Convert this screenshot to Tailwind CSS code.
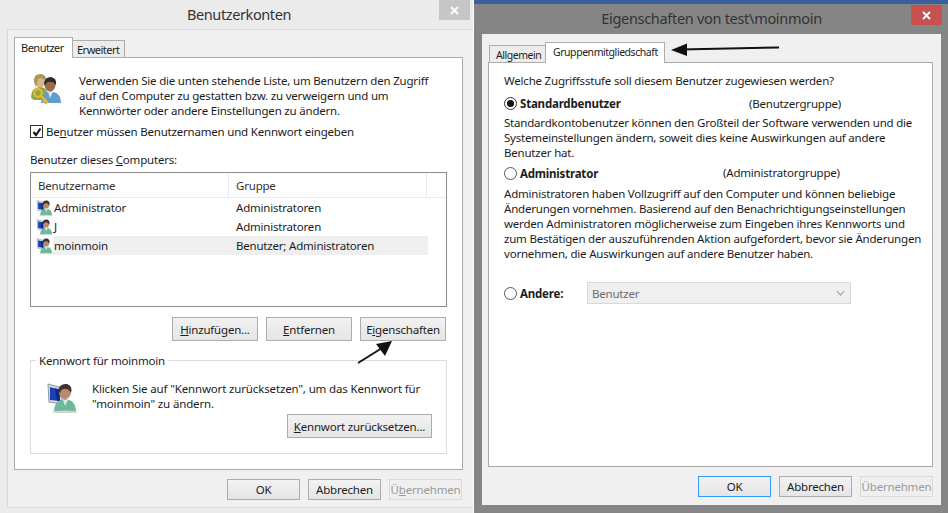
<!DOCTYPE html>
<html lang="de">
<head>
<meta charset="UTF-8">
<title>Benutzerkonten</title>
<script src="https://cdn.jsdelivr.net/npm/@tailwindcss/browser@4"></script>
</head>
<body class="w-[948px] h-[513px] overflow-hidden bg-white text-[#1c1c1c] text-[11.5px] leading-[15px] tracking-[-0.2px] whitespace-nowrap font-['Noto_Sans',sans-serif]">

<!-- shared icons -->
<svg class="hidden">
  <symbol id="pc-user" viewBox="0 0 32 32">
    <path d="M2 3 L16 7 L16 23 L3 21 Z" fill="#d5dbe2" stroke="#8a96a3" stroke-width="1"/>
    <path d="M4 6 L14 9 L14 20 L4 19 Z" fill="#1c3fb5"/>
    <path d="M9 7 L14 9 L14 20 L11 20 Z" fill="#0d2a8a"/>
    <ellipse cx="19" cy="11" rx="6" ry="7" fill="#b98a68"/>
    <path d="M12 9 Q14 2 21 3 Q27 5 25 12 Q22 7 18 8 Q15 8 14 12 Z" fill="#3b3430"/>
    <path d="M8 31 Q8 19 19 18 Q30 19 30 31 Z" fill="#6fb79a"/>
    <path d="M17 19 L19 25 L22 19 Z" fill="#d7ece2"/>
    <ellipse cx="19" cy="31" rx="13" ry="1.4" fill="#cfd6d2"/>
  </symbol>
  <symbol id="users-key" viewBox="0 0 32 32">
    <ellipse cx="10" cy="8" rx="5.5" ry="6.5" fill="#dcb48c"/>
    <path d="M4 9 Q3 1 11 1 Q17 2 16 8 Q12 4 8 6 Q7 11 6 14 Z" fill="#a89a58"/>
    <path d="M1 25 Q1 14 10 14 Q17 14 18 22 L14 27 L4 27 Z" fill="#8aa84e"/>
    <ellipse cx="20" cy="12" rx="5.5" ry="6.5" fill="#9c6a48"/>
    <path d="M14 10 Q15 4 21 4 Q27 5 26 12 Q23 8 19 9 Q16 9 15 13 Z" fill="#2e2a28"/>
    <path d="M11 30 Q11 19 20 18.500 Q31 19 31 30 Z" fill="#5f9fd0"/>
    <path d="M18 19 L20 25 L23 19 Z" fill="#d6e6f2"/>
    <circle cx="8" cy="20" r="3.800" fill="none" stroke="#eeb52c" stroke-width="2.200"/>
    <path d="M11 23 L18 30 M15 27 L13 29 M17 29 L15 31" stroke="#eeb52c" stroke-width="2.200" fill="none"/>
  </symbol>
</svg>

<div class="flex h-full">

  <!-- left dialog -->
  <div class="relative w-[473px] h-full bg-[#ebebeb] flex flex-col shrink-0">
    <div class="h-[29px] flex items-center justify-center text-[14.5px] tracking-[-0.4px] text-[#333] pl-[5px] pb-[1px]">Benutzerkonten</div>
    <div class="absolute top-0 right-[3px] w-[31px] h-[20px] bg-[#c6c6c6] flex items-center justify-center">
      <svg class="w-[9px] h-[9px]" viewBox="0 0 9 9"><path d="M1 1 L8 8 M8 1 L1 8" stroke="#fff" stroke-width="1.800"/></svg>
    </div>

    <div class="ml-[7px] h-[479px] border border-[#d9d9d9] border-r-0 bg-[#f0f0f0] pl-[6px] pr-[10px] pt-[7px]">
      <!-- tabs -->
      <div class="flex items-end h-[21px] relative z-10 text-[11px] tracking-[-0.5px]">
        <div class="w-[59px] h-[21px] bg-white border border-[#adadad] border-b-0 pl-[6px] pt-[2px]">Benutzer</div>
        <div class="w-[52px] h-[18px] bg-[#ececec] border border-[#adadad] border-l-0 pl-[4px] pt-[1px]">Erweitert</div>
      </div>
      <!-- panel -->
      <div class="-mt-[1px] h-[413px] border border-[#a8a8a8] bg-white pt-[15px] pl-[15px] pr-[13px]">
        <div class="flex">
          <svg class="w-[32px] h-[32px] shrink-0"><use href="#users-key"/></svg>
          <p class="ml-[17px] w-[370px]">Verwenden Sie die unten stehende Liste, um Benutzern den Zugriff<br>auf den Computer zu gestatten bzw. zu verweigern und um<br>Kennwörter oder andere Einstellungen zu ändern.</p>
        </div>
        <div class="mt-[6px] flex items-center h-[15px]">
          <div class="w-[13px] h-[13px] border border-[#333] bg-white flex items-center justify-center">
            <svg class="w-[10px] h-[10px]" viewBox="0 0 10 10"><path d="M1.500 5 L4 8 L8.500 1.500" fill="none" stroke="#111" stroke-width="2"/></svg>
          </div>
          <span class="ml-[3px]">Be<u>n</u>utzer müssen Benutzernamen und Kennwort eingeben</span>
        </div>
        <div class="mt-[13px]">Benutzer dieses <u>C</u>omputers:</div>
        <!-- user list -->
        <div class="mt-[5px] w-[417px] h-[135px] border border-[#8c8c8c] bg-white">
          <div class="flex h-[25px] border-b border-[#e5eef6] items-center text-[#333]">
            <div class="w-[198px] h-full pl-[7px] flex items-center border-r border-[#e5eef6]">Benutzername</div>
            <div class="w-[198px] h-full pl-[7px] flex items-center border-r border-[#e5eef6]">Gruppe</div>
          </div>
          <div class="flex h-[19px] items-center">
            <svg class="ml-[5px] w-[17px] h-[17px] shrink-0"><use href="#pc-user"/></svg>
            <span class="w-[183px] pl-[1px]">Administrator</span><span>Administratoren</span>
          </div>
          <div class="flex h-[19px] items-center">
            <svg class="ml-[5px] w-[17px] h-[17px] shrink-0"><use href="#pc-user"/></svg>
            <span class="w-[183px] pl-[1px]">J</span><span>Administratoren</span>
          </div>
          <div class="flex h-[19px] items-center w-[397px]">
            <svg class="ml-[5px] w-[17px] h-[17px] shrink-0"><use href="#pc-user"/></svg>
            <div class="flex-1 h-full flex items-center bg-[#efefef]">
              <span class="w-[183px] pl-[1px]">moinmoin</span><span>Benutzer; Administratoren</span>
            </div>
          </div>
        </div>
        <div class="mt-[10px] flex justify-end gap-[8px] w-[416px]">
          <button class="w-[86px] h-[24px] border border-[#acacac] bg-linear-to-b from-[#f2f2f2] to-[#e5e5e5]"><u>H</u>inzufügen...</button>
          <button class="w-[86px] h-[24px] border border-[#acacac] bg-linear-to-b from-[#f2f2f2] to-[#e5e5e5]"><u>E</u>ntfernen</button>
          <button class="w-[86px] h-[24px] border border-[#acacac] bg-linear-to-b from-[#f2f2f2] to-[#e5e5e5]">E<u>i</u>genschaften</button>
        </div>
        <!-- password group -->
        <div class="relative mt-[19px] w-[417px] h-[94px] border border-[#dcdcdc] pl-[15px] pt-[20px]">
          <span class="absolute -top-[8px] left-[5px] bg-white px-[3px]">Kennwort für moinmoin</span>
          <div class="flex">
            <svg class="w-[32px] h-[32px] shrink-0"><use href="#pc-user"/></svg>
            <p class="ml-[14px] tracking-[-0.15px]">Klicken Sie auf "Kennwort zurücksetzen", um das Kennwort für<br>"moinmoin" zu ändern.</p>
          </div>
          <button class="absolute left-[256px] top-[53px] w-[145px] h-[24px] border border-[#acacac] bg-linear-to-b from-[#f2f2f2] to-[#e5e5e5]"><u>K</u>ennwort zurücksetzen...</button>
        </div>
      </div>
      <!-- footer -->
      <div class="mt-[9px] flex gap-[8px] pl-[213px]">
        <button class="w-[73px] h-[21px] border border-[#acacac] bg-linear-to-b from-[#f2f2f2] to-[#e5e5e5]">OK</button>
        <button class="w-[73px] h-[21px] border border-[#acacac] bg-linear-to-b from-[#f2f2f2] to-[#e5e5e5]">Abbrechen</button>
        <button class="w-[73px] h-[21px] border border-[#d9d9d9] bg-[#efefef] text-[#9a9a9a]">Ü<u>b</u>ernehmen</button>
      </div>
    </div>

    <!-- annotation arrow -->
    <svg class="absolute left-[350px] top-[335px] w-[50px] h-[35px]" viewBox="0 0 50 35">
      <path d="M8 28 L32 13" stroke="#111" stroke-width="2"/>
      <path d="M42 6 L26 9 L35 21 Z" fill="#111"/>
    </svg>
  </div>

  <!-- gap -->
  <div class="w-[1px] shrink-0"></div>

  <!-- right dialog -->
  <div class="relative flex-1 h-full flex flex-col bg-[#858585]">
    <div class="h-[4px] bg-[#3b5f9c]"></div>
    <div class="h-[30px] flex items-center justify-center text-[14.5px] tracking-[-0.3px] text-[#333] pb-[2px]">Eigenschaften von test\moinmoin</div>
    <div class="absolute top-[5px] right-[7px] w-[31px] h-[20px] bg-[#c75050] flex items-center justify-center">
      <svg class="w-[9px] h-[9px]" viewBox="0 0 9 9"><path d="M1 1 L8 8 M8 1 L1 8" stroke="#fff" stroke-width="1.800"/></svg>
    </div>

    <div class="mx-[8px] h-[471px] bg-[#f0f0f0] pl-[6px] pr-[8px] pt-[8px]">
      <div class="flex items-end h-[21px] relative z-10 pl-[1px] text-[10.5px] tracking-[-0.45px]">
        <div class="w-[56px] h-[18px] bg-[#ececec] border border-[#adadad] border-r-0 pl-[6px] pt-[2px]">Allgemein</div>
        <div class="w-[120px] h-[21px] bg-white border border-[#adadad] border-b-0 pl-[7px] pt-[2px]">Gruppenmitgliedschaft</div>
      </div>
      <div class="-mt-[1px] h-[405px] border border-[#a8a8a8] bg-white pt-[10px] pl-[15px] pr-[10px]">
        <p>Welche Zugriffsstufe soll diesem Benutzer zugewiesen werden?</p>
        <div class="mt-[8px] flex items-center h-[15px]">
          <div class="w-[13px] h-[13px] rounded-full border border-[#333] bg-white flex items-center justify-center"><div class="w-[7px] h-[7px] rounded-full bg-[#111]"></div></div>
          <b class="ml-[3px] w-[229px] font-bold">Standardbenutzer</b>
          <span>(Benutzergruppe)</span>
        </div>
        <p class="mt-[4px]">Standardkontobenutzer können den Großteil der Software verwenden und die<br>Systemeinstellungen ändern, soweit dies keine Auswirkungen auf andere<br>Benutzer hat.</p>
        <div class="mt-[6px] flex items-center h-[15px]">
          <div class="w-[13px] h-[13px] rounded-full border border-[#555] bg-white"></div>
          <b class="ml-[3px] w-[203px] font-bold">Administrator</b>
          <span class="-mt-[2px]">(Administratorgruppe)</span>
        </div>
        <p class="mt-[5px]">Administratoren haben Vollzugriff auf den Computer und können beliebige<br>Änderungen vornehmen. Basierend auf den Benachrichtigungseinstellungen<br>werden Administratoren möglicherweise zum Eingeben ihres Kennworts und<br>zum Bestätigen der auszuführenden Aktion aufgefordert, bevor sie Änderungen<br>vornehmen, die Auswirkungen auf andere Benutzer haben.</p>
        <div class="mt-[21px] flex items-center h-[22px]">
          <div class="w-[13px] h-[13px] rounded-full border border-[#555] bg-white"></div>
          <b class="ml-[3px] w-[67px] font-bold">Andere:</b>
          <div class="w-[264px] h-[22px] border border-[#d9d9d9] bg-[#efefef] flex items-center justify-between pl-[4px] pr-[5px] text-[#6d6d6d]">
            <span>Benutzer</span>
            <svg class="w-[9px] h-[6px]" viewBox="0 0 9 6"><path d="M1 1 L4.500 5 L8 1" fill="none" stroke="#b5b5b5" stroke-width="1.600"/></svg>
          </div>
        </div>
      </div>
      <div class="mt-[9px] flex gap-[8px] pl-[210px]">
        <button class="w-[73px] h-[21px] border border-[#3399ff] bg-linear-to-b from-[#f2f2f2] to-[#e5e5e5]">OK</button>
        <button class="w-[73px] h-[21px] border border-[#acacac] bg-linear-to-b from-[#f2f2f2] to-[#e5e5e5]">Abbrechen</button>
        <button class="w-[73px] h-[21px] border border-[#d9d9d9] bg-[#efefef] text-[#9a9a9a]">Übernehmen</button>
      </div>
    </div>

    <!-- annotation arrow -->
    <svg class="absolute left-[192px] top-[40px] w-[120px] h-[20px]" viewBox="0 0 120 20">
      <path d="M14 9.500 L113 7.500" stroke="#111" stroke-width="2"/>
      <path d="M5 10 L21 3.500 L21 16 Z" fill="#111"/>
    </svg>
  </div>
</div>
</body>
</html>
